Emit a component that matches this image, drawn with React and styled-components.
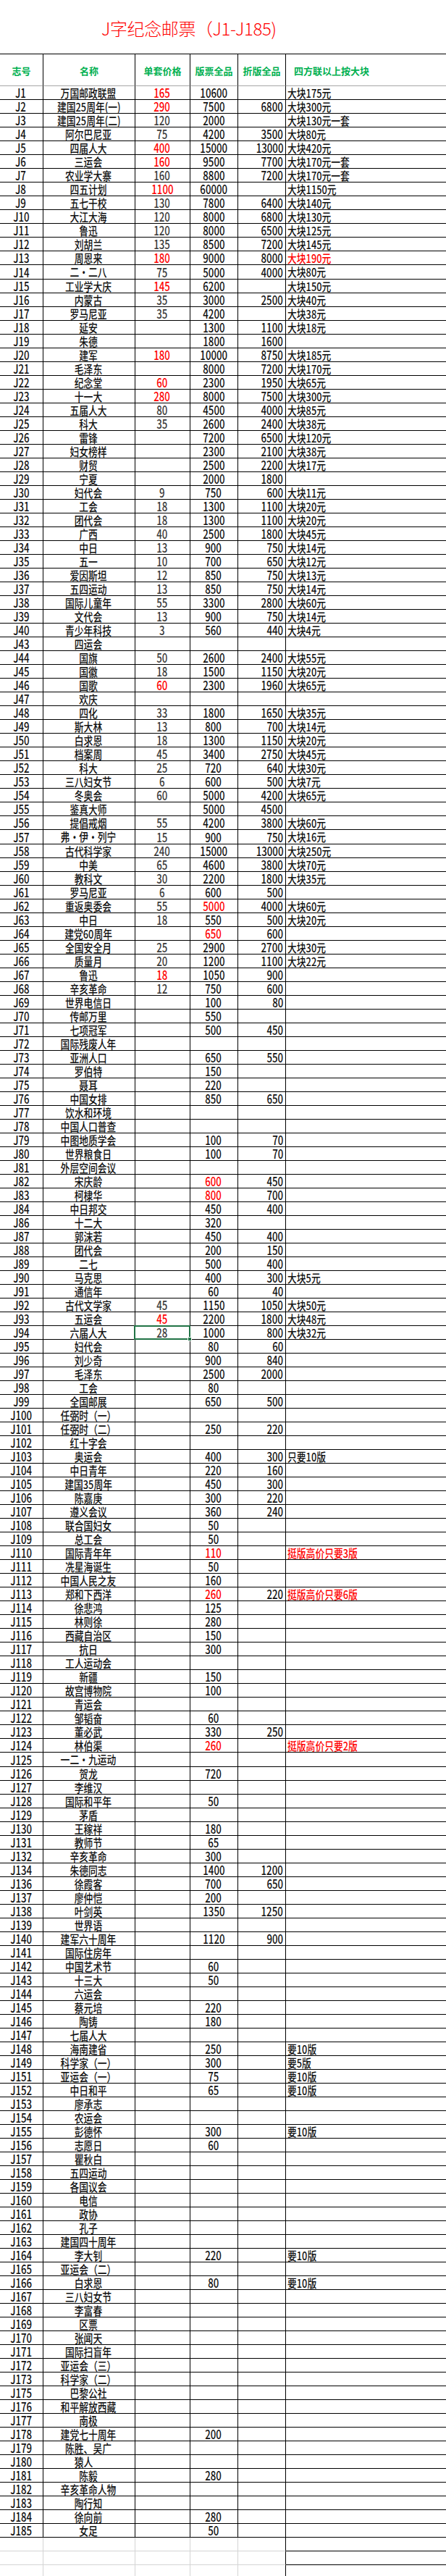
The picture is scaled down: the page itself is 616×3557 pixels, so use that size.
import styled, { createGlobalStyle } from "styled-components";

const GlobalStyle = createGlobalStyle`
    html, body {
        margin: 0;
        padding: 0;
        background: #fff;
    }
    body {
        font-family: "Noto Sans CJK SC", sans-serif;
    }
`;

const COLS = "60px 127px 76px 66px 66px 1fr";

// 志号|名称|单套价格|版票全品|折版全品|四方联以上按大块 ; "*" = red text
const DATA = `J1|万国邮政联盟|165*|10600||大块175元
J2|建国25周年(一)|290*|7500|6800|大块300元
J3|建国25周年(二)|120|2000||大块130元一套
J4|阿尔巴尼亚|75|4200|3500|大块80元
J5|四届人大|400*|15000|13000|大块420元
J6|三运会|160*|9500|7700|大块170元一套
J7|农业学大寨|160|8800|7200|大块170元一套
J8|四五计划|1100*|60000||大块1150元
J9|五七干校|130|7800|6400|大块140元
J10|大江大海|120|8000|6800|大块130元
J11|鲁迅|120|8000|6500|大块125元
J12|刘胡兰|135|8500|7200|大块145元
J13|周恩来|180*|9000|8000|大块190元*
J14|二·二八|75|5000|4000|大块80元
J15|工业学大庆|145*|6200||大块150元
J16|内蒙古|35|3000|2500|大块40元
J17|罗马尼亚|35|4200||大块38元
J18|延安||1300|1100|大块18元
J19|朱德||1800|1600|
J20|建军|180*|10000|8750|大块185元
J21|毛泽东||8000|7200|大块170元
J22|纪念堂|60*|2300|1950|大块65元
J23|十一大|280*|8000|7500|大块300元
J24|五届人大|80|4500|4000|大块85元
J25|科大|35|2600|2400|大块38元
J26|雷锋||7200|6500|大块120元
J27|妇女榜样||2300|2100|大块38元
J28|财贸||2500|2200|大块17元
J29|宁夏||2000|1800|
J30|妇代会|9|750|600|大块11元
J31|工会|18|1300|1100|大块20元
J32|团代会|18|1300|1100|大块20元
J33|广西|40|2500|1800|大块45元
J34|中日|13|900|750|大块14元
J35|五一|10|700|650|大块12元
J36|爱因斯坦|12|850|750|大块13元
J37|五四运动|13|850|750|大块14元
J38|国际儿童年|55|3300|2800|大块60元
J39|文代会|13|900|750|大块14元
J40|青少年科技|3|560|440|大块4元
J43|四运会||||
J44|国旗|50|2600|2400|大块55元
J45|国徽|18|1500|1150|大块20元
J46|国歌|60*|2300|1960|大块65元
J47|欢庆||||
J48|四化|33|1800|1650|大块35元
J49|斯大林|13|800|700|大块14元
J50|白求恩|18|1300|1150|大块20元
J51|档案周|45|3400|2750|大块45元
J52|科大|25|720|640|大块30元
J53|三八妇女节|6|600|500|大块7元
J54|冬奥会|60|5000|4200|大块65元
J55|鉴真大师||5000|4500|
J56|提倡戒烟|55|4200|3800|大块60元
J57|弗·伊·列宁|15|900|750|大块16元
J58|古代科学家|240|15000|13000|大块250元
J59|中美|65|4600|3800|大块70元
J60|教科文|30|2200|1800|大块35元
J61|罗马尼亚|6|600|500|
J62|重返奥委会|55|5000*|4000|大块60元
J63|中日|18|550|500|大块20元
J64|建党60周年||650*|600|
J65|全国安全月|25|2900|2700|大块30元
J66|质量月|20|1200|1100|大块22元
J67|鲁迅|18*|1050|900|
J68|辛亥革命|12|750|600|
J69|世界电信日||100|80|
J70|传邮万里||550||
J71|七项冠军||500|450|
J72|国际残废人年||||
J73|亚洲人口||650|550|
J74|罗伯特||150||
J75|聂耳||220||
J76|中国女排||850|650|
J77|饮水和环境||||
J78|中国人口普查||||
J79|中图地质学会||100|70|
J80|世界粮食日||100|70|
J81|外层空间会议||||
J82|宋庆龄||600*|450|
J83|柯棣华||800*|700|
J84|中日邦交||450|400|
J86|十二大||320||
J87|郭沫若||450|400|
J88|团代会||200|150|
J89|二七||500|400|
J90|马克思||400|300|大块5元
J91|通信年||60|40|
J92|古代文学家|45|1150|1050|大块50元
J93|五运会|45*|2200|1800|大块48元
J94|六届人大|28|1000|800|大块32元
J95|妇代会||80|60|
J96|刘少奇||900|840|
J97|毛泽东||2500|2000|
J98|工会||80||
J99|全国邮展||650|500|
J100|任弼时（一）||||
J101|任弼时（二）||250|220|
J102|红十字会||||
J103|奥运会||400|300|只要10版
J104|中日青年||220|160|
J105|建国35周年||450|300|
J106|陈嘉庚||300|220|
J107|遵义会议||360|240|
J108|联合国妇女||50||
J109|总工会||50||
J110|国际青年年||110*||挺版高价只要3版*
J111|冼星海诞生||50||
J112|中国人民之友||160||
J113|郑和下西洋||260*|220|挺版高价只要6版*
J114|徐悲鸿||125||
J115|林则徐||280||
J116|西藏自治区||150||
J117|抗日||300||
J118|工人运动会||||
J119|新疆||150||
J120|故宫博物院||100||
J121|青运会||||
J122|邹韬奋||60||
J123|董必武||330|250|
J124|林伯渠||260*||挺版高价只要2版*
J125|一二·九运动||||
J126|贺龙||720||
J127|李维汉||||
J128|国际和平年||50||
J129|茅盾||||
J130|王稼祥||180||
J131|教师节||65||
J132|辛亥革命||300||
J134|朱德同志||1400|1200|
J136|徐霞客||700|650|
J137|廖仲恺||200||
J138|叶剑英||1350|1250|
J139|世界语||||
J140|建军六十周年||1120|900|
J141|国际住房年||||
J142|中国艺术节||60||
J143|十三大||50||
J144|六运会||||
J145|蔡元培||220||
J146|陶铸||180||
J147|七届人大||||
J148|海南建省||250||要10版
J149|科学家（一）||300||要5版
J151|亚运会（一）||75||要10版
J152|中日和平||65||要10版
J153|廖承志||||
J154|农运会||||
J155|彭德怀||300||要10版
J156|志愿日||60||
J157|瞿秋白||||
J158|五四运动||||
J159|各国议会||||
J160|电信||||
J161|政协||||
J162|孔子||||
J163|建国四十周年||||
J164|李大钊||220||要10版
J165|亚运会（二）||||
J166|白求恩||80||要10版
J167|三八妇女节||||
J168|李富春||||
J169|区票||||
J170|张闻天||||
J171|国际扫盲年||||
J172|亚运会（三）||||
J173|科学家（二）||||
J175|巴黎公社||||
J176|和平解放西藏||||
J177|南极||||
J178|建党七十周年||200||
J179|陈胜、吴广||||
J180|猿人　||||
J181|陈毅||280||
J182|辛亥革命人物||||
J183|陶行知||||
J184|徐向前||280||
J185|女足||50||`;

const TALL_ROWS = ["J14", "J57", "J125"];
const SELECTED = "J94";

const parse = (v) => {
    const red = v.endsWith("*");
    return { text: red ? v.slice(0, -1) : v, red };
};

const rows = DATA.split("\n").map((line) => {
    const [id, name, price, full, fold, note] = line.split("|");
    return {
        id,
        name,
        price: parse(price),
        full: parse(full),
        fold: parse(fold),
        note: parse(note),
    };
});

const Page = styled.div`
    width: 616px;
    height: 3557px;
    overflow: hidden;
    background: #fff;
`;

const TitleRow = styled.div`
    height: 74px;
    box-sizing: border-box;
    padding: 25px 0 0 140px;
    color: #ff0000;
    font-family: "Noto Sans CJK SC", sans-serif;
    font-size: 24px;
    line-height: 28px;
    font-weight: 300;
    letter-spacing: -0.4px;
    white-space: nowrap;
`;

const Sheet = styled.div`
    border-top: 1px solid #000;
`;

const HeaderRow = styled.div`
    display: grid;
    grid-template-columns: ${COLS};
    height: 44px;
`;

const HeaderCell = styled.div`
    box-sizing: border-box;
    border-right: ${(p) => (p.$last ? "none" : "1px solid #000")};
    border-bottom: 1px solid #a6a6a6;
    text-align: ${(p) => (p.$last ? "left" : "center")};
    padding: 2px 0 0 ${(p) => (p.$last ? "11px" : "0")};
    color: #00b050;
    font-family: "Noto Sans CJK SC", sans-serif;
    font-size: 13px;
    font-weight: 700;
    line-height: 41px;
    white-space: nowrap;
`;

const Row = styled.div`
    display: grid;
    grid-template-columns: ${COLS};
    height: ${(p) => (p.$tall ? "20px" : "19px")};
`;

const Cell = styled.div`
    position: relative;
    box-sizing: border-box;
    min-width: 0;
    border-right: ${(p) => (p.$last ? "none" : "1px solid #000")};
    border-bottom: 1px solid #000;
    text-align: ${(p) => p.$align || "center"};
    padding: 0 3px 0 2px;
    white-space: pre;
    font-family: "Noto Sans CJK SC", sans-serif;
    font-size: ${(p) => (p.$text ? 16 : 17)}px;
    font-weight: 500;
    line-height: ${(p) => (p.$tall ? "19px" : "18px")};
    color: ${(p) => (p.$red ? "#ff0000" : p.$muted ? "#3a3a3a" : "#111")};

    ${(p) =>
        p.$selected &&
        `
        &::before {
            content: "";
            position: absolute;
            left: -2px;
            top: -1px;
            right: -1px;
            bottom: -1px;
            border: 2px solid #217346;
            z-index: 2;
        }
        &::after {
            content: "";
            position: absolute;
            right: -3px;
            bottom: -3px;
            width: 4px;
            height: 4px;
            background: #217346;
            border: 1px solid #fff;
            z-index: 3;
        }
    `}
`;

// the sheet's font is a tall, condensed one: squeeze the glyphs sideways
const Squeezed = styled.span`
    display: inline-block;
    transform: scaleX(${(p) => (p.$text ? 0.8 : 0.78)});
    transform-origin: ${(p) =>
        p.$align === "right" ? "right" : p.$align === "left" ? "left" : "center"} center;
`;

const FillerRow = styled.div`
    display: grid;
    grid-template-columns: ${COLS};
    height: 19px;
`;

const FillerCell = styled.div`
    box-sizing: border-box;
    border-right: ${(p) => (p.$last ? "none" : p.$edge ? "1px solid #000" : "1px solid #d4d4d4")};
    border-bottom: 1px solid ${(p) => (p.$last ? "#000" : "#d4d4d4")};
`;

const HEADERS = ["志号", "名称", "单套价格", "版票全品", "折版全品", "四方联以上按大块"];

const TextCell = ({ align, children, ...rest }) => (
    <Cell $align={align} {...rest}>
        {children ? (
            <Squeezed $align={align} $text={rest.$text}>
                {children}
            </Squeezed>
        ) : null}
    </Cell>
);

const StampRow = ({ row }) => {
    const tall = TALL_ROWS.includes(row.id);
    return (
        <Row $tall={tall}>
            <TextCell $tall={tall}>{row.id}</TextCell>
            <TextCell $tall={tall} $text>
                {row.name}
            </TextCell>
            <TextCell $tall={tall} $muted $red={row.price.red} $selected={row.id === SELECTED}>
                {row.price.text}
            </TextCell>
            <TextCell $tall={tall} $red={row.full.red}>
                {row.full.text}
            </TextCell>
            <TextCell $tall={tall} align="right" $red={row.fold.red}>
                {row.fold.text}
            </TextCell>
            <TextCell $tall={tall} $last $text align="left" $red={row.note.red}>
                {row.note.text}
            </TextCell>
        </Row>
    );
};

const App = () => {
    return (
        <>
            <GlobalStyle />
            <Page>
                <TitleRow>J字纪念邮票（J1-J185)</TitleRow>
                <Sheet>
                    <HeaderRow>
                        {HEADERS.map((h, i) => (
                            <HeaderCell key={h} $last={i === HEADERS.length - 1}>
                                {h}
                            </HeaderCell>
                        ))}
                    </HeaderRow>
                    {rows.map((row) => (
                        <StampRow key={row.id} row={row} />
                    ))}
                    {[0, 1, 2].map((n) => (
                        <FillerRow key={n}>
                            <FillerCell />
                            <FillerCell />
                            <FillerCell />
                            <FillerCell />
                            <FillerCell $edge />
                            <FillerCell $last />
                        </FillerRow>
                    ))}
                </Sheet>
            </Page>
        </>
    );
};

export default App;
